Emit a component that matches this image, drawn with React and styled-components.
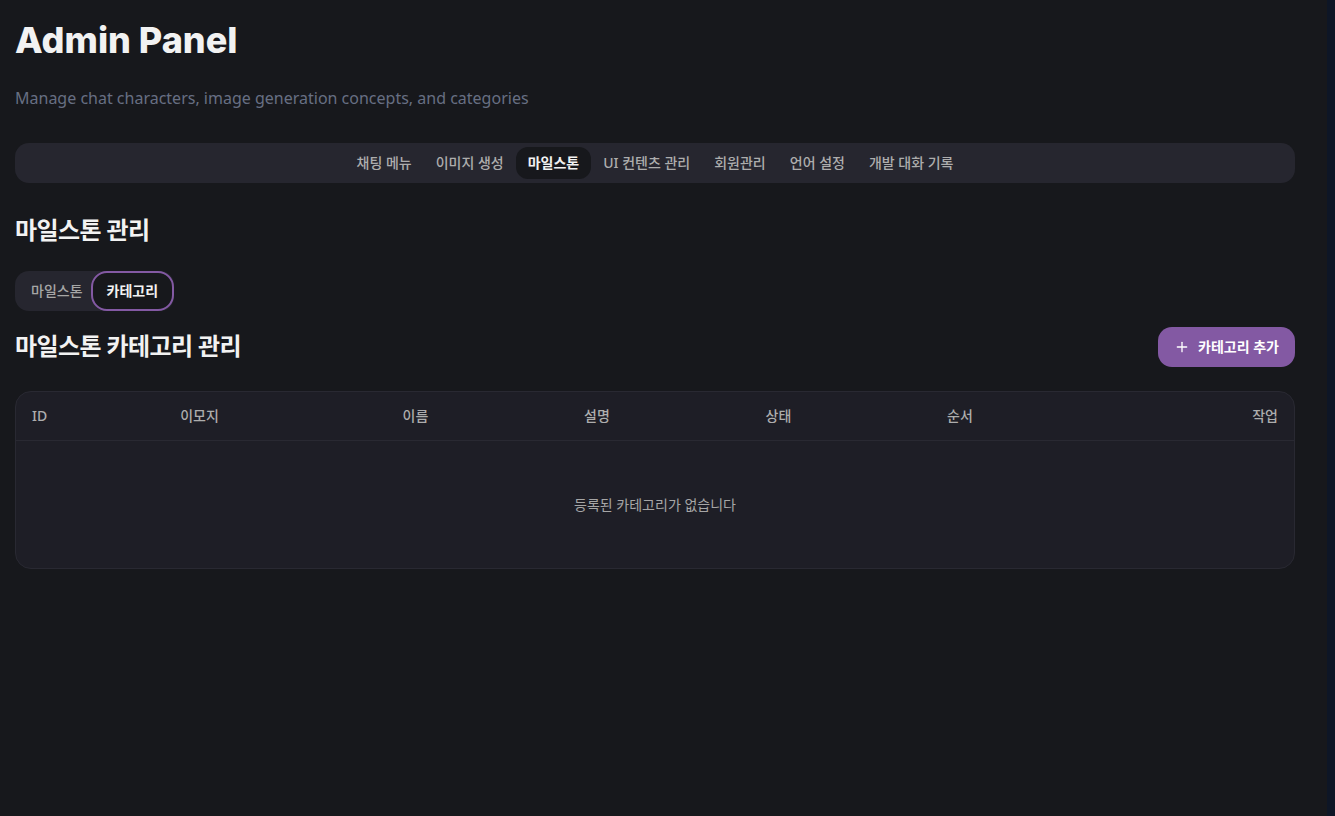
import React from "react";
import styled, { createGlobalStyle } from "styled-components";
import { Plus } from "lucide-react";

const GlobalStyle = createGlobalStyle`
  *, *::before, *::after { box-sizing: border-box; }
  body {
    margin: 0;
    background: #0e1626;
    color: #f2f2f2;
    font-family: "Noto Sans", "Noto Sans CJK KR", sans-serif;
    font-size: 14px;
    line-height: 20px;
  }
  h1, h2, p { margin: 0; }
  button { font: inherit; border: 0; cursor: pointer; }
`;

const Page = styled.main`
  min-height: 100vh;
  margin-right: 8px;
  padding: 20px 32px 32px 15px;
  background: #17181c;
`;

const PageHeader = styled.header`
  display: flex;
  flex-direction: column;
  gap: 26px;
  margin-bottom: 33px;
`;

const PageTitle = styled.h1`
  font-family: Inter, sans-serif;
  font-size: 36px;
  font-weight: 800;
  line-height: 40px;
`;

const Subtitle = styled.p`
  color: #676f83;
  font-size: 16px;
  line-height: 24px;
`;

const MainTabs = styled.nav`
  display: flex;
  justify-content: center;
  padding: 4px;
  margin-bottom: 28px;
  border-radius: 14px;
  background: #26262f;
`;

const MainTab = styled.button`
  height: 32px;
  padding: 0 12px;
  border-radius: 12px;
  background: ${(p) => (p.$active ? "#17181c" : "transparent")};
  color: ${(p) => (p.$active ? "#f2f2f2" : "#adadad")};
  font-weight: ${(p) => (p.$active ? 700 : 500)};
`;

const SectionTitle = styled.h2`
  font-size: 24px;
  font-weight: 700;
  line-height: 38px;
  letter-spacing: -0.025em;
`;

const SubTabs = styled.div`
  display: flex;
  width: fit-content;
  height: 40px;
  margin: 22px 0 16px;
  padding-left: 4px;
  border-radius: 14px;
  background: #26262f;
`;

const SubTab = styled.button`
  padding: 0 ${(p) => (p.$active ? "14px" : "8px 0 12px")};
  border: ${(p) => (p.$active ? "2px solid #8359a3" : "0")};
  border-radius: 16px;
  background: ${(p) => (p.$active ? "#17181c" : "transparent")};
  color: ${(p) => (p.$active ? "#f2f2f2" : "#a6a6a6")};
  font-weight: ${(p) => (p.$active ? 600 : 500)};
`;

const SectionBar = styled.div`
  display: flex;
  align-items: flex-start;
  justify-content: space-between;
  margin-bottom: 24px;
`;

const AddButton = styled.button`
  display: flex;
  align-items: center;
  gap: 8px;
  height: 40px;
  padding: 0 16px;
  border-radius: 14px;
  background: #8359a3;
  color: #ffffff;
  font-weight: 600;
`;

const TableCard = styled.section`
  overflow: hidden;
  border: 1px solid #292932;
  border-radius: 16px;
  background: #1e1e26;
`;

const Table = styled.table`
  width: 100%;
  table-layout: fixed;
  border-collapse: separate;
  border-spacing: 0;
`;

const HeadCell = styled.th`
  width: ${(p) => p.$width};
  height: 49px;
  padding: 0 16px;
  border-bottom: 1px solid #292932;
  color: #adadad;
  font-weight: 500;
  text-align: ${(p) => p.$align || "left"};
`;

const EmptyCell = styled.td`
  height: 127px;
  padding: 0 16px;
  color: #a6a6a6;
  text-align: center;
`;

const mainTabs = ["채팅 메뉴", "이미지 생성", "마일스톤", "UI 컨텐츠 관리", "회원관리", "언어 설정", "개발 대화 기록"];
const subTabs = ["마일스톤", "카테고리"];
const columns = [
  { label: "ID", width: "11.6%" },
  { label: "이모지", width: "17.4%" },
  { label: "이름", width: "14.2%" },
  { label: "설명", width: "14.2%" },
  { label: "상태", width: "14.2%" },
  { label: "순서", width: "14.2%" },
  { label: "작업", width: "14.2%", align: "right" },
];

export default function App() {
  return (
    <>
      <GlobalStyle />
      <Page>
        <PageHeader>
          <PageTitle>Admin Panel</PageTitle>
          <Subtitle>Manage chat characters, image generation concepts, and categories</Subtitle>
        </PageHeader>
        <MainTabs>
          {mainTabs.map((label) => (
            <MainTab key={label} type="button" $active={label === "마일스톤"}>
              {label}
            </MainTab>
          ))}
        </MainTabs>
        <SectionTitle>마일스톤 관리</SectionTitle>
        <SubTabs role="tablist">
          {subTabs.map((label) => (
            <SubTab key={label} type="button" role="tab" aria-selected={label === "카테고리"} $active={label === "카테고리"}>
              {label}
            </SubTab>
          ))}
        </SubTabs>
        <SectionBar>
          <SectionTitle>마일스톤 카테고리 관리</SectionTitle>
          <AddButton type="button">
            <Plus size={16} strokeWidth={2} />
            카테고리 추가
          </AddButton>
        </SectionBar>
        <TableCard>
          <Table>
            <thead>
              <tr>
                {columns.map((c) => (
                  <HeadCell key={c.label} scope="col" $width={c.width} $align={c.align}>
                    {c.label}
                  </HeadCell>
                ))}
              </tr>
            </thead>
            <tbody>
              <tr>
                <EmptyCell colSpan={columns.length}>등록된 카테고리가 없습니다</EmptyCell>
              </tr>
            </tbody>
          </Table>
        </TableCard>
      </Page>
    </>
  );
}
